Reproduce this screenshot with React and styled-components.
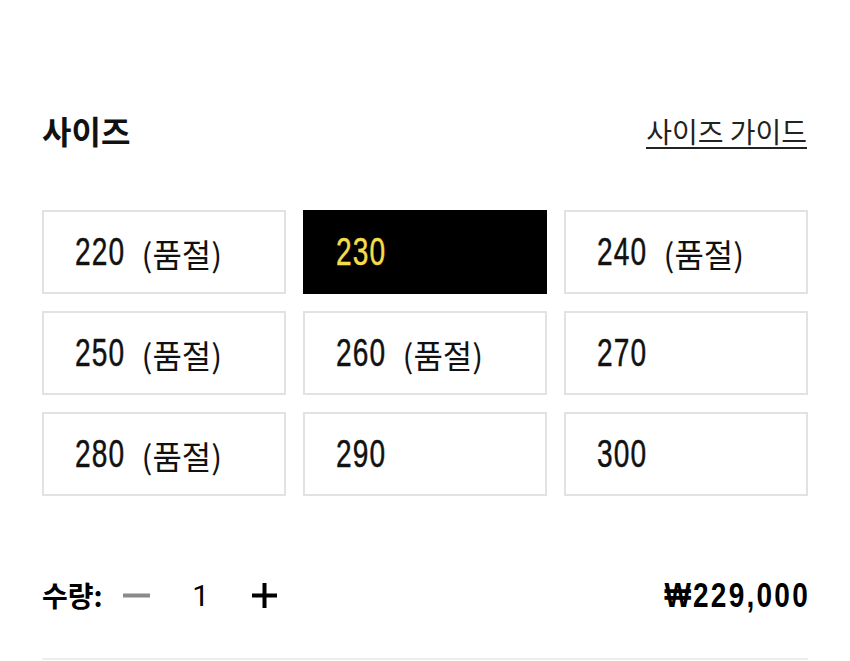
import React, {useState} from 'react'
import styled, {createGlobalStyle} from 'styled-components'

const sizes = [
    {size: 220, soldOut: true},
    {size: 230, soldOut: false},
    {size: 240, soldOut: true},
    {size: 250, soldOut: true},
    {size: 260, soldOut: true},
    {size: 270, soldOut: false},
    {size: 280, soldOut: true},
    {size: 290, soldOut: false},
    {size: 300, soldOut: false},
]

const App = () => {
    const [selected, setSelected] = useState(230)
    const [qty, setQty] = useState(1)

    return (
        <>
            <Global />
            <Container>
                <Header>
                    <Title>사이즈</Title>
                    <Guide href="#">사이즈 가이드</Guide>
                </Header>
                <Grid>
                    {sizes.map((s) => (
                        <SizeBox
                            key={s.size}
                            $active={selected === s.size}
                            onClick={() => setSelected(s.size)}
                        >
                            <Num>{s.size}</Num>
                            {s.soldOut && <Sold>(품절)</Sold>}
                        </SizeBox>
                    ))}
                </Grid>
                <QtyRow>
                    <QtyLeft>
                        <QtyLabel>수량:</QtyLabel>
                        <StepBtn onClick={() => setQty(Math.max(1, qty - 1))}>
                            <svg width="27" height="27" viewBox="0 0 27 27">
                                <rect x="0" y="11.5" width="27" height="4" fill="#8a8a8a" />
                            </svg>
                        </StepBtn>
                        <Count>{qty}</Count>
                        <StepBtn onClick={() => setQty(qty + 1)}>
                            <svg width="25" height="25" viewBox="0 0 25 25">
                                <rect x="0" y="10.5" width="25" height="4" fill="#000" />
                                <rect x="10.5" y="0" width="4" height="25" fill="#000" />
                            </svg>
                        </StepBtn>
                    </QtyLeft>
                    <Price>₩229,000</Price>
                </QtyRow>
            </Container>
        </>
    )
}

export default App

const Global = createGlobalStyle`
body {
    margin: 0;
    background: #fff;
    font-family: "Noto Sans CJK KR", "Noto Sans", sans-serif;
    color: #000;
}
`
const Container = styled.div`
width: 766px;
margin: 0 auto;
padding-top: 110px;
`
const Header = styled.div`
display: flex;
justify-content: space-between;
align-items: center;
height: 40px;
`
const Title = styled.div`
font-size: 32px;
font-weight: 700;
color: #111;
`
const Guide = styled.a`
font-size: 28px;
color: #222;
text-decoration: none;
border-bottom: 2px solid #222;
line-height: 32px;
margin-top: 4px;
margin-right: 1px;
`
const Grid = styled.div`
display: grid;
grid-template-columns: repeat(3, 1fr);
gap: 17px;
margin-top: 60px;
`
const SizeBox = styled.div`
box-sizing: border-box;
height: 84px;
display: flex;
align-items: center;
gap: 17px;
padding-left: 31px;
border: 2px solid ${(p) => (p.$active ? '#000' : '#e2e2e2')};
background: ${(p) => (p.$active ? '#000' : '#fff')};
color: ${(p) => (p.$active ? '#f4dd4c' : '#111')};
cursor: pointer;
`
const Num = styled.span`
display: inline-block;
font-family: "Liberation Sans", Arial, sans-serif;
font-size: 39px;
letter-spacing: 1.5px;
-webkit-text-stroke: 0.5px currentColor;
transform: scaleX(0.72);
transform-origin: left center;
margin-right: -20px;
`
const Sold = styled.span`
font-size: 32px;
font-family: "Noto Sans CJK KR", sans-serif;
margin-top: 2px;
`
const QtyRow = styled.div`
display: flex;
justify-content: space-between;
align-items: center;
height: 40px;
margin-top: 79px;
padding-bottom: 43px;
border-bottom: 2px solid #eeeeee;
`
const QtyLeft = styled.div`
display: flex;
align-items: center;
`
const QtyLabel = styled.div`
font-size: 28px;
font-weight: 700;
margin-right: 20px;
`
const StepBtn = styled.button`
border: none;
background: none;
padding: 0;
display: flex;
cursor: pointer;
`
const Count = styled.div`
font-family: Roboto, sans-serif;
font-size: 30px;
width: 102px;
text-align: center;
`
const Price = styled.div`
font-family: "Liberation Sans", Arial, sans-serif;
font-weight: 700;
font-size: 35px;
letter-spacing: 2.8px;
transform: scaleX(0.8);
transform-origin: right center;
margin-right: -2px;
`
